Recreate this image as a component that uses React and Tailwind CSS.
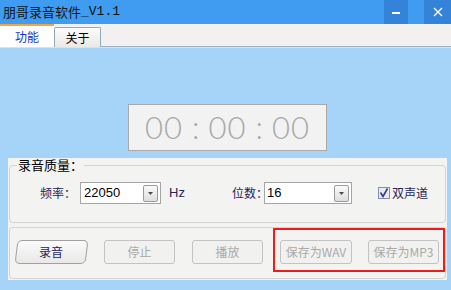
export default function App() {
  const cjk = { fontFamily: '"Noto Sans CJK SC", "Liberation Sans", sans-serif' };
  const latin = { fontFamily: '"Liberation Sans", "Noto Sans CJK SC", sans-serif' };

  return (
    <div className="w-[451px] h-[290px] flex flex-col overflow-hidden bg-[#a6d4f8]" style={cjk}>
      {/* title bar */}
      <div className="h-[24px] flex items-stretch bg-[#3f9cf0]">
        <div className="flex-1 pl-[3px] flex items-center text-[13px] text-[#141414]">
          朋哥录音软件<span style={{ fontFamily: '"Liberation Mono", monospace' }}>_V1.1</span>
        </div>
        <div className="w-[24px] bg-[#3483d8] flex items-center justify-center">
          <div className="w-[8px] h-[2px] bg-white mt-[1px]" />
        </div>
        <div className="w-[16px]" />
        <div className="w-[27px] bg-[#3483d8] flex items-center justify-center text-white">
          <svg width="10" height="10" viewBox="0 0 10 10">
            <path d="M1 1L9 9M9 1L1 9" stroke="white" strokeWidth="1.4" />
          </svg>
        </div>
      </div>

      {/* tab bar */}
      <div className="h-[23px] flex items-end bg-[#f2f1f0]">
        <div className="w-[54px] h-[23px] bg-white border-t-[2px] border-[#f3a43a] flex items-center justify-center text-[12px] text-[#1432c8]">
          功能
        </div>
        <div className="w-[47px] h-[20px] bg-gradient-to-b from-[#fbfbfb] to-[#ebe9e5] border border-b-0 border-[#95a8ba] rounded-t-[2px] flex items-center justify-center text-[12px] text-black">
          关于
        </div>
        <div className="flex-1 h-[1px] bg-[#9fb0c0]" />
      </div>

      {/* content */}
      <div className="flex-1 flex flex-col border-t border-[#c9e6fc]">
        <div className="ml-[128px] mt-[56px] w-[199px] h-[47px] bg-[#f2f2f2] border border-[#a9a9a9] flex items-center justify-center gap-[9px] text-[31px] text-[#a8a8a8] font-light" style={{ fontFamily: 'Lato, "Liberation Sans", sans-serif' }}>
          <span className="tracking-[1px]">00</span>
          <span>:</span>
          <span className="tracking-[1px]">00</span>
          <span>:</span>
          <span className="tracking-[1px]">00</span>
        </div>

        <div className="ml-[8px] mt-[7px] w-[439px] h-[122px] bg-[#f3f3f1] flex flex-col px-[1px]">
          {/* quality group */}
          <fieldset className="h-[65px] border border-[#d3d3d3] rounded-[4px] px-[6px]">
            <legend className="ml-[1px] px-[1px] text-[13px] leading-[14px] text-black">录音质量：</legend>
            <div className="flex items-center mt-[10px] h-[22px] text-[12px] text-[#24245a] whitespace-nowrap">
              <span className="ml-[24px] w-[40px] shrink-0">频率：</span>
              <div className="w-[81px] h-[22px] shrink-0 bg-white border border-[#a5a5a5] flex items-center justify-between pl-[3px] pr-[2px] text-[13px] text-black" style={latin}>
                <span>22050</span>
                <DropBtn />
              </div>
              <span className="ml-[8px] w-[15px] text-[13px] shrink-0" style={latin}>Hz</span>
              <span className="ml-[48px] w-[32px] shrink-0">位数：</span>
              <div className="w-[88px] h-[22px] shrink-0 bg-white border border-[#a5a5a5] flex items-center justify-between pl-[2px] pr-[2px] text-[13px] text-black" style={latin}>
                <span>16</span>
                <DropBtn />
              </div>
              <div className="ml-[26px] w-[12px] h-[12px] shrink-0 border border-[#7f90b5] bg-[#eaeaf2] flex items-center justify-center">
                <svg width="10" height="10" viewBox="0 0 10 10">
                  <path d="M1.5 4.5L4 8.5L8.5 0.5" stroke="#3a3a8a" strokeWidth="1.6" fill="none" />
                </svg>
              </div>
              <span className="ml-[2px] shrink-0">双声道</span>
            </div>
          </fieldset>

          {/* control group */}
          <div className="mt-[4px] h-[52px] border border-[#d3d3d3] rounded-[4px] flex items-start pl-[6px]">
            <div className="mt-[12px] w-[71px] h-[24px] -skew-x-[7deg] rounded-[5px] border border-[#a0a0a0] bg-gradient-to-b from-[#fbfbfb] to-[#e8e8e8] flex items-center justify-center">
              <span className="skew-x-[7deg] text-[12px] text-[#1c1c5a]">录音</span>
            </div>
            <DisabledBtn className="ml-[17px] mt-[12px]">停止</DisabledBtn>
            <DisabledBtn className="ml-[17px] mt-[12px]">播放</DisabledBtn>
            <div className="ml-[10px] w-[172px] h-[44px] border-2 border-[#ee1c1c] flex items-start pl-[5px] pt-[10px]">
              <DisabledBtn className="w-[72px]">保存为WAV</DisabledBtn>
              <DisabledBtn className="ml-[16px]">保存为MP3</DisabledBtn>
            </div>
          </div>
        </div>
      </div>
    </div>
  );
}

function DropBtn() {
  return (
    <div className="w-[15px] h-[17px] border border-[#9a9a9a] rounded-[2px] bg-gradient-to-b from-[#fafafa] to-[#dedede] flex items-center justify-center">
      <svg width="5" height="3" viewBox="0 0 5 3">
        <path d="M0 0H5L2.5 3Z" fill="#4a4a4a" />
      </svg>
    </div>
  );
}

function DisabledBtn({ className = '', children }) {
  return (
    <div className={`w-[71px] h-[24px] shrink-0 rounded-[3px] border border-[#c3c3c3] bg-[#f1f1f0] flex items-center justify-center text-[12px] text-[#a9a9a9] whitespace-nowrap ${className}`}>
      {children}
    </div>
  );
}
